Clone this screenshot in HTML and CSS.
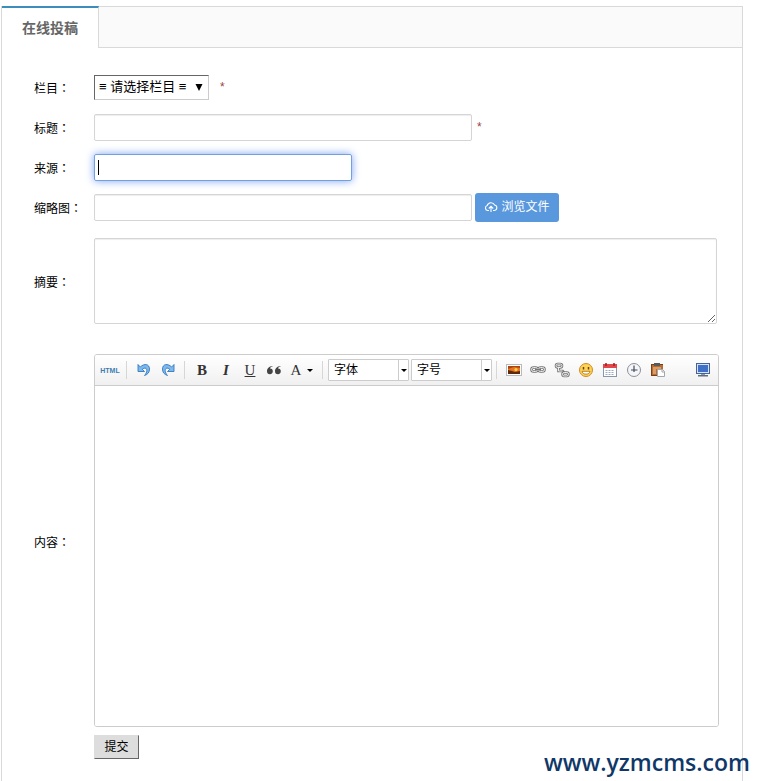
FILE: index.html
```html
<!DOCTYPE html>
<html lang="zh-CN">
<head>
    <meta charset="UTF-8">
    <title>在线投稿</title>
    <link rel="stylesheet" href="styles.css">
</head>
<body>
    <div class="panel">
        <div class="tabs">
            <a class="tab active" href="#contribute">在线投稿</a>
        </div>

        <form class="form" id="contribute">
            <div class="row">
                <label class="name" for="catid">栏目：</label>
                <div class="field">
                    <span class="category">
                        <select id="catid"><option>≡ 请选择栏目 ≡</option></select>
                        <svg class="arrow" viewBox="0 0 8 7" width="8" height="7"><path d="M0.5 0h7L4 7z"/></svg>
                    </span>
                    <span class="required wide">*</span>
                </div>
            </div>
            <div class="row">
                <label class="name" for="title">标题：</label>
                <div class="field">
                    <input class="text" type="text" id="title">
                    <span class="required">*</span>
                </div>
            </div>
            <div class="row">
                <label class="name" for="source">来源：</label>
                <div class="field">
                    <input class="text short focused" type="text" id="source">
                </div>
            </div>
            <div class="row">
                <label class="name" for="thumb">缩略图：</label>
                <div class="field">
                    <input class="text" type="text" id="thumb">
                    <button class="upload" type="button">
                        <svg viewBox="0 0 14 12" width="14" height="12" fill="none" stroke="currentColor" stroke-width="1.1">
                            <path d="M5 9.500H3.500A2.600 2.600 0 0 1 3.200 4.500A4 4 0 0 1 10.600 4A2.800 2.800 0 0 1 10.500 9.500H9M7 11V5.500M4.800 7.500L7 5.300L9.200 7.500"/>
                        </svg>
                        <span>浏览文件</span>
                    </button>
                </div>
            </div>
            <div class="row summary">
                <label class="name" for="description">摘要：</label>
                <div class="field">
                    <textarea id="description"></textarea>
                </div>
            </div>
            <div class="row content">
                <label class="name" for="content">内容：</label>
                <div class="field">
                    <div class="editor">
                        <div class="toolbar">
                            <button type="button" class="tool html" title="源代码">HTML</button>
                            <span class="sep"></span>
                            <button type="button" class="tool" title="撤销">
                                <svg viewBox="0 0 16 16" width="16" height="16">
                                    <path d="M2 2.500v7h6.500L6.300 7.300C8.500 5.300 10.800 6 10.800 8.500c0 1.800-.8 3.300-2.300 5 3.300-1 5-3.200 5-6.500C13.500 2 8.500 1 4.300 5z" fill="#7db8ee" stroke="#3479bd" stroke-width=".9"/>
                                </svg>
                            </button>
                            <button type="button" class="tool" title="重做">
                                <svg viewBox="0 0 16 16" width="16" height="16">
                                    <path d="M14 2.500v7H7.500l2.200-2.200C7.500 5.300 5.200 6 5.200 8.500c0 1.800.8 3.300 2.300 5-3.300-1-5-3.200-5-6.500C2.500 2 7.500 1 11.700 5z" fill="#7db8ee" stroke="#3479bd" stroke-width=".9"/>
                                </svg>
                            </button>
                            <span class="sep"></span>
                            <button type="button" class="tool letter bold" title="加粗">B</button>
                            <button type="button" class="tool letter italic" title="斜体">I</button>
                            <button type="button" class="tool letter underline" title="下划线">U</button>
                            <button type="button" class="tool" title="引用">
                                <svg viewBox="0 0 16 16" width="16" height="16" fill="#444">
                                    <path d="M6.500 4C3.200 4.300 1 6.300 1 9.300a2.900 2.900 0 1 0 3-2.900C4.200 5.500 5 4.800 6.500 4.500zM14.500 4C11.200 4.300 9 6.300 9 9.300a2.900 2.900 0 1 0 3-2.900c.2-.9 1-1.600 2.500-1.900z"/>
                                </svg>
                            </button>
                            <button type="button" class="tool letter color" title="字体颜色">
                                A
                                <svg viewBox="0 0 6 3" width="6" height="3"><path d="M0 0h6L3 3z"/></svg>
                            </button>
                            <span class="sep"></span>
                            <span class="combo">
                                <select aria-label="字体"><option>字体</option></select>
                                <svg viewBox="0 0 6 3" width="6" height="3"><path d="M0 0h6L3 3z"/></svg>
                            </span>
                            <span class="combo">
                                <select aria-label="字号"><option>字号</option></select>
                                <svg viewBox="0 0 6 3" width="6" height="3"><path d="M0 0h6L3 3z"/></svg>
                            </span>
                            <span class="sep"></span>
                            <button type="button" class="tool" title="图片">
                                <svg viewBox="0 0 16 16" width="16" height="16">
                                    <rect x=".5" y="2.500" width="15" height="11" fill="#fff" stroke="#bbb"/>
                                    <rect x="2" y="4" width="12" height="8" fill="#e9761e"/>
                                    <path d="M2 4h12v2L8 5 2 7z" fill="#a8440e"/>
                                    <circle cx="10" cy="7.500" r="1.500" fill="#ffd24d"/>
                                    <path d="M2 8l4 1 3 1 5-1v3H2z" fill="#5b2a10"/>
                                </svg>
                            </button>
                            <button type="button" class="tool" title="超链接">
                                <svg viewBox="0 0 16 16" width="16" height="16" fill="none">
                                    <g stroke="#777" stroke-width="2.600"><rect x="1.500" y="5.500" width="6" height="4" rx="2"/><rect x="8.500" y="5.500" width="6" height="4" rx="2"/></g>
                                    <g stroke="#eee"><rect x="1.500" y="5.500" width="6" height="4" rx="2"/><rect x="8.500" y="5.500" width="6" height="4" rx="2"/></g>
                                    <path d="M5 7.500h6" stroke="#777" stroke-width="1.500"/>
                                </svg>
                            </button>
                            <button type="button" class="tool" title="取消链接">
                                <svg viewBox="0 0 16 16" width="16" height="16" fill="none">
                                    <g stroke="#777" stroke-width="2.600"><rect x="2" y="2" width="6" height="3.500" rx="1.700"/><rect x="8.500" y="10.500" width="6" height="3.500" rx="1.700"/><path d="M4.500 6v3h4M8 8.500l2 2"/></g>
                                    <g stroke="#eee"><rect x="2" y="2" width="6" height="3.500" rx="1.700"/><rect x="8.500" y="10.500" width="6" height="3.500" rx="1.700"/><path d="M4.500 6v3h4"/></g>
                                </svg>
                            </button>
                            <button type="button" class="tool" title="表情">
                                <svg viewBox="0 0 16 16" width="16" height="16">
                                    <circle cx="8" cy="8" r="6.500" fill="#fbd457" stroke="#d48a1c"/>
                                    <path d="M5.500 5v2.500M10.500 5v2.500" stroke="#70400c" stroke-width="1.500"/>
                                    <path d="M4 9.300h8c-.5 3.800-7.500 3.800-8 0z" fill="#fff" stroke="#a86510" stroke-width=".8"/>
                                </svg>
                            </button>
                            <button type="button" class="tool" title="日期">
                                <svg viewBox="0 0 16 16" width="16" height="16">
                                    <rect x="1.500" y="2.500" width="13" height="12" fill="#fff" stroke="#8996a8"/>
                                    <path d="M1 2h14v4H1z" fill="#e2474c"/>
                                    <path d="M4 1v3M12 1v3" stroke="#9c1f25" stroke-width="1.500"/>
                                    <path d="M3.500 8.500h9M3.500 10.500h9M3.500 12.500h9" stroke="#9aabc4" stroke-dasharray="2 1"/>
                                </svg>
                            </button>
                            <button type="button" class="tool" title="时间">
                                <svg viewBox="0 0 16 16" width="16" height="16">
                                    <circle cx="8" cy="8" r="6.500" fill="#f4f6fa" stroke="#8b8f96"/>
                                    <path d="M8 3.500V8h3.500M5 8h3v2" fill="none" stroke="#444b57" stroke-width="1.200"/>
                                </svg>
                            </button>
                            <button type="button" class="tool" title="粘贴">
                                <svg viewBox="0 0 16 16" width="16" height="16">
                                    <path d="M1 2h12v12H1z" fill="#b66c36"/>
                                    <path d="M1.500 2v12M1 13.500h6M1 2.500h12" stroke="#774017"/>
                                    <path d="M4 1h6v3H4z" fill="#595959"/>
                                    <path d="M3 5h8v2H6v5H3z" fill="#dc9c64"/>
                                    <path d="M7.500 7.500h5l2 2v5h-7z" fill="#fff" stroke="#a1a7ad"/>
                                    <path d="M12 7.500v2.500h2.500" fill="none" stroke="#a1a7ad"/>
                                </svg>
                            </button>
                            <button type="button" class="tool fullscreen" title="全屏">
                                <svg viewBox="0 0 16 16" width="16" height="16">
                                    <rect x="1.500" y="1.500" width="13" height="10" fill="#d9e2f2" stroke="#44639c"/>
                                    <rect x="3" y="3" width="10" height="7" fill="#3e70c8"/>
                                    <path d="M6 12h4v1H6z" fill="#8c99ae"/>
                                    <path d="M3 13h10v1.500H3z" fill="#5d6c86"/>
                                </svg>
                            </button>
                        </div>
                        <textarea class="body" id="content"></textarea>
                    </div>
                    <button class="submit" type="submit">提交</button>
                </div>
            </div>
        </form>
    </div>

    <div class="watermark">www.yzmcms.com</div>
</body>
</html>
```
FILE: styles.css
```css
* {
    margin: 0;
    padding: 0;
    box-sizing: border-box;
}

body {
    position: relative;
    min-height: 100vh;
    display: flex;
    padding: 6px 15px 0 1px;
    background: #fff;
    color: #000;
    font: 12px/20px "Liberation Sans", "Noto Sans CJK SC", sans-serif;
}

button,
input,
select,
textarea {
    font: inherit;
    color: inherit;
}

.panel {
    flex: 1;
    border: 1px solid #d9d9d9;
    border-bottom: 0;
}

/* Tabs */
.tabs {
    display: flex;
    height: 41px;
    background: #fafafa;
    border-bottom: 1px solid #d9d9d9;
}

.tab {
    height: 42px;
    margin-top: -1px;
    padding: 0 20px;
    background: #fff;
    border-top: 2px solid #3c8dbc;
    border-right: 1px solid #d9d9d9;
    color: #666;
    font-size: 14px;
    font-weight: bold;
    line-height: 40px;
    text-decoration: none;
}

/* Form rows */
.form {
    padding: 19px 23px 20px 32px;
}

.row {
    display: flex;
    align-items: center;
    min-height: 40px;
}

/* Traditional face: its full-width colon sits in the middle of the cell */
.name {
    flex: none;
    width: 60px;
    padding-top: 2px;
    font-family: "Noto Sans CJK TC", sans-serif;
    font-feature-settings: "locl" 0;
}

.field {
    flex: 1;
    display: flex;
    align-items: center;
}

.category {
    position: relative;
}

.category select {
    display: block;
    width: 115px;
    height: 25px;
    padding-left: 4px;
    appearance: none;
    background: #fff;
    border: 1px solid #ccc;
    border-top-color: #666;
    border-left-color: #666;
    font-size: 13px;
}

.category .arrow {
    position: absolute;
    top: 9px;
    right: 6px;
    pointer-events: none;
}

.required {
    margin-left: 5px;
    color: #944;
}

.required.wide {
    margin-left: 11px;
}

.text {
    width: 378px;
    height: 27px;
    padding: 0 4px;
    border: 1px solid #d5d5d5;
    border-radius: 2px;
    box-shadow: inset 0 1px 1px #eee;
    outline: none;
}

.text.short {
    width: 258px;
}

.text:focus,
.text.focused {
    border-color: #72a0e0;
    box-shadow: 0 0 8px #7ba2f0;
}

/* Insertion bar of the active field */
.text.focused {
    background: linear-gradient(#000, #000) 3px center / 1px 15px no-repeat;
}

.upload {
    display: flex;
    align-items: center;
    justify-content: center;
    gap: 3px;
    width: 84px;
    height: 29px;
    margin-left: 3px;
    background: #5a98de;
    border: 0;
    border-radius: 3px;
    color: #fff;
}

.summary {
    min-height: 108px;
}

.summary textarea {
    width: 100%;
    height: 86px;
    margin-right: 2px;
    padding: 4px;
    border: 1px solid #d5d5d5;
    border-radius: 2px;
    box-shadow: inset 0 1px 1px #eee;
}

.content {
    padding-top: 19px;
}

.content .name {
    padding-bottom: 32px;
}

.content .field {
    flex-direction: column;
    align-items: flex-start;
    gap: 8px;
}

/* Editor */
.editor {
    width: 100%;
    border: 1px solid #ccc;
    border-radius: 3px;
    overflow: hidden;
}

.toolbar {
    display: flex;
    align-items: center;
    height: 31px;
    padding: 0 3px;
    background: linear-gradient(#fff, #f0f0f0);
    border-bottom: 1px solid #ccc;
}

.tool {
    display: flex;
    align-items: center;
    justify-content: center;
    flex: none;
    width: 24px;
    height: 24px;
    background: none;
    border: 0;
}

.html {
    color: #3d7db0;
    font: bold 7px "Liberation Sans", sans-serif;
}

.letter {
    color: #333;
    font: 15px "Liberation Serif", serif;
}

.bold {
    font-weight: bold;
}

.italic {
    font-weight: bold;
    font-style: italic;
}

.underline {
    text-decoration: underline;
}

.color {
    gap: 6px;
    width: 32px;
}

.sep {
    width: 1px;
    height: 18px;
    margin: 0 5px 0 4px;
    background: #d6d6d6;
}

.combo {
    position: relative;
}

.combo + .combo {
    margin-left: 2px;
}

.combo select {
    display: block;
    width: 81px;
    height: 22px;
    padding-left: 5px;
    appearance: none;
    background: linear-gradient(#ccc, #ccc) 69px 0 / 1px 100% no-repeat #fff;
    border: 1px solid #ccc;
    border-radius: 1px;
}

.combo svg {
    position: absolute;
    top: 10px;
    right: 2px;
    pointer-events: none;
}

.fullscreen {
    margin-left: auto;
}

.body {
    display: block;
    width: 100%;
    height: 340px;
    padding: 8px;
    border: 0;
    outline: none;
    resize: none;
}

.submit {
    width: 45px;
    height: 24px;
    background: #ddd;
    border: 1px solid #ddd;
    border-right-color: #666;
    border-bottom-color: #666;
}

.watermark {
    position: absolute;
    right: 8px;
    bottom: 3px;
    color: #0f3868;
    font: 600 23px/32px "Open Sans", sans-serif;
}
```
